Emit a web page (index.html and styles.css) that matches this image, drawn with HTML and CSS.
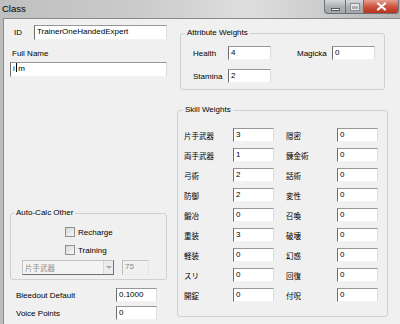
FILE: index.html
```html
<!DOCTYPE html>
<html lang="ja">
<head>
  <meta charset="UTF-8">
  <meta name="viewport" content="width=device-width, initial-scale=1.0">
  <title>Class</title>
  <link rel="stylesheet" href="styles.css">
</head>
<body>
  <div class="window">
    <div class="titlebar">
      <span class="title">Class</span>
      <div class="controls">
        <span class="ctl min"><span class="min-bar"></span></span>
        <span class="ctl max"><span class="max-box"></span></span>
        <span class="ctl close">
          <svg width="11" height="9" viewBox="0 0 11 9"><path d="M2 1.5 L9 7.5 M9 1.5 L2 7.5" stroke="#fff" stroke-width="2.2" stroke-linecap="round"/></svg>
        </span>
      </div>
    </div>

    <div class="client">
      <div class="col-left">
        <div class="id-row">
          <label>ID</label>
          <div class="edit id-edit">TrainerOneHandedExpert</div>
        </div>
        <label class="fn-label">Full Name</label>
        <div class="edit fn-edit">i<span class="caret"></span>m</div>

        <fieldset class="group autocalc">
          <legend>Auto-Calc Other</legend>
          <div class="group-body">
            <div class="check"><span class="box"></span>Recharge</div>
            <div class="check"><span class="box"></span>Training</div>
            <div class="combo-row">
              <div class="combo"><span class="jp">片手武器</span><span class="drop"><span class="arrow"></span></span></div>
              <div class="edit disabled small">75</div>
            </div>
          </div>
        </fieldset>

        <div class="field-row">
          <label>Bleedout Default</label>
          <div class="edit num">0.1000</div>
        </div>
        <div class="field-row voice">
          <label>Voice Points</label>
          <div class="edit num">0</div>
        </div>
      </div>

      <div class="col-right">
        <fieldset class="group attrs">
          <legend>Attribute Weights</legend>
          <div class="group-body attr-grid">
            <label>Health</label><div class="edit">4</div>
            <label>Magicka</label><div class="edit">0</div>
            <label>Stamina</label><div class="edit">2</div>
          </div>
        </fieldset>

        <fieldset class="group skills">
          <legend>Skill Weights</legend>
          <div class="group-body skill-grid">
            <label class="jp">片手武器</label><div class="edit">3</div><label class="jp">隠密</label><div class="edit">0</div>
            <label class="jp">両手武器</label><div class="edit">1</div><label class="jp">錬金術</label><div class="edit">0</div>
            <label class="jp">弓術</label><div class="edit">2</div><label class="jp">話術</label><div class="edit">0</div>
            <label class="jp">防御</label><div class="edit">2</div><label class="jp">変性</label><div class="edit">0</div>
            <label class="jp">鍛冶</label><div class="edit">0</div><label class="jp">召喚</label><div class="edit">0</div>
            <label class="jp">重装</label><div class="edit">3</div><label class="jp">破壊</label><div class="edit">0</div>
            <label class="jp">軽装</label><div class="edit">0</div><label class="jp">幻惑</label><div class="edit">0</div>
            <label class="jp">スリ</label><div class="edit">0</div><label class="jp">回復</label><div class="edit">0</div>
            <label class="jp">開錠</label><div class="edit">0</div><label class="jp">付呪</label><div class="edit">0</div>
          </div>
        </fieldset>
      </div>
    </div>
  </div>
</body>
</html>
```

FILE: styles.css
```css
* {
  box-sizing: border-box;
}
body {
  margin: 0;
  font-family: "Liberation Sans", "Noto Sans CJK JP", sans-serif;
  font-size: 8px;
  color: #000;
  background: #f0f0f0;
}
.window {
  width: 400px;
  height: 324px;
  overflow: hidden;
  display: flex;
  flex-direction: column;
  background: #bdbdbd;
}

/* title bar */
.titlebar {
  height: 18px;
  flex-shrink: 0;
  display: flex;
  align-items: flex-start;
  background: linear-gradient(90deg, #bfbfbf 0%, #cbcbcb 35%, #dedede 62%, #cdcdcd 80%, #b3b3b3 100%);
}
.title {
  font-size: 9.5px;
  line-height: 11px;
  padding: 3px 0 0 2px;
}
.controls {
  margin-left: auto;
  margin-right: 1px;
  display: flex;
}
.ctl {
  height: 14px;
  display: flex;
  align-items: center;
  justify-content: center;
  border: 1px solid #6c7177;
  border-top: none;
}
.min {
  width: 22px;
  border-radius: 0 0 0 4px;
  background: linear-gradient(#d6d8da, #aeb1b4 50%, #a3a6a9);
}
.max {
  width: 18px;
  border-left: none;
  background: linear-gradient(#d6d8da, #aeb1b4 50%, #a3a6a9);
}
.close {
  width: 35px;
  border-left: none;
  border-radius: 0 0 4px 0;
  background: linear-gradient(#e5a093, #cf5540 50%, #b8321f);
}
.min-bar {
  width: 9px;
  height: 3px;
  margin-top: 5px;
  background: #f4f4f4;
  border: 1px solid #555b61;
}
.max-box {
  width: 8px;
  height: 6px;
  border: 1px solid #e6e6e6;
  border-top-width: 2px;
  outline: 1px solid #8a8f94;
}

/* client area */
.client {
  flex: 1;
  margin-left: 3px;
  border-left: 1px solid #8a8a8a;
  border-top: 1px solid #8a8a8a;
  background: #f0f0f0;
  display: flex;
  gap: 10px;
  padding: 6px 0 0 6px;
}
.col-left {
  width: 157px;
  display: flex;
  flex-direction: column;
}
.col-right {
  width: 211px;
  display: flex;
  flex-direction: column;
}

.edit {
  height: 14px;
  line-height: 12px;
  padding: 0 2px;
  background: #fff;
  border: 1px solid;
  border-color: #979797 #dedede #f3f3f3 #6e6e6e;
  white-space: nowrap;
  overflow: hidden;
}
.edit.disabled {
  background: #f0f0f0;
  color: #8a8a8a;
  border-color: #c4c4c4 #e4e4e4 #ececec #bcbcbc;
}
.jp {
  font-size: 7.5px;
}

.id-row {
  display: flex;
  align-items: center;
  padding-left: 4px;
}
.id-row label {
  width: 20px;
}
.id-edit {
  flex: 1;
  height: 15px;
}
.fn-label {
  display: block;
  line-height: 10px;
  margin: 9px 0 0 2px;
}
.fn-edit {
  margin-top: 3px;
  height: 15px;
}
.caret {
  display: inline-block;
  width: 1.5px;
  height: 9px;
  margin: 0 1px;
  vertical-align: -1px;
  background: #000;
}

/* group boxes */
.group {
  margin: 0;
  padding: 0;
  min-width: 0;
  border: 1px solid #d0d0d0;
  border-radius: 3px;
}
.group legend {
  padding: 0 2px;
  line-height: 10px;
}
.autocalc {
  margin-top: 131px;
}
.autocalc legend {
  margin-left: 3px;
}
.autocalc .group-body {
  padding: 9px 0 4px 0;
}
.check {
  display: flex;
  align-items: center;
  gap: 3px;
  height: 10px;
  margin-left: 54px;
  margin-bottom: 8px;
}
.box {
  width: 10px;
  height: 10px;
  border: 1px solid #8e8f8f;
  background: linear-gradient(135deg, #d8d8d8, #f8f8f8);
}
.combo-row {
  display: flex;
  gap: 8px;
  margin: -3px 0 0 11px;
}
.combo {
  width: 92px;
  height: 15px;
  display: flex;
  align-items: center;
  padding-left: 2px;
  color: #8a8a8a;
  background: #f4f4f4;
  border: 1px solid;
  border-color: #c2c2c2 #6f6f6f #6f6f6f #c2c2c2;
}
.drop {
  margin-left: auto;
  width: 10px;
  height: 13px;
  display: flex;
  align-items: center;
  justify-content: center;
  border-left: 1px solid #d8d8d8;
  background: #ececec;
}
.arrow {
  width: 0;
  height: 0;
  border-left: 3px solid transparent;
  border-right: 3px solid transparent;
  border-top: 3px solid #a8a8a8;
}
.small {
  width: 27px;
  height: 15px;
}

.field-row {
  display: flex;
  align-items: center;
  margin-top: 8px;
  padding-left: 6px;
}
.field-row.voice {
  margin-top: 4px;
}
.field-row label {
  width: 100px;
}
.num {
  width: 41px;
}

/* right side */
.attrs {
  margin: 3px 3px 0;
}
.attrs legend {
  margin-left: 4px;
}
.attr-grid {
  display: grid;
  grid-template-columns: 35px 69px 35px 43px;
  row-gap: 9px;
  align-items: center;
  padding: 8px 9px 6px 12px;
}
.attr-grid .edit {
  width: 43px;
}
.skills {
  margin-top: 15px;
}
.skills legend {
  margin-left: 5px;
}
.skill-grid {
  display: grid;
  grid-template-columns: 49px 53px 51px 41px;
  row-gap: 6px;
  align-items: center;
  padding: 13px 9px 14px 6px;
}
.skill-grid .edit {
  width: 41px;
}
```
